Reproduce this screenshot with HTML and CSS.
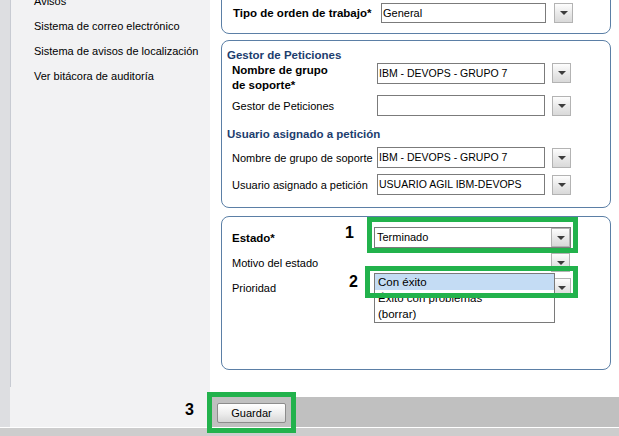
FILE: index.html
```html
<!DOCTYPE html>
<html lang="es">
<head>
<meta charset="utf-8">
<title>Orden de trabajo</title>
<link rel="stylesheet" href="styles.css">
</head>
<body>
<div class="app">
  <div class="top">
    <aside class="sidebar">
      <div class="strip"></div>
      <nav class="nav">
        <ul class="nav-list">
          <li>Avisos</li>
          <li>Sistema de correo electrónico</li>
          <li>Sistema de avisos de localización</li>
          <li>Ver bitácora de auditoría</li>
        </ul>
        <div class="nav-foot"></div>
      </nav>
    </aside>
    <main class="main">
      <div class="content">
        <section class="panel panel-1">
          <div class="row">
            <span class="label label-1 bold">Tipo de orden de trabajo*</span>
            <span class="field field-1">General</span>
            <span class="drop drop-1"></span>
          </div>
        </section>

        <section class="panel panel-2">
          <h3 class="heading">Gestor de Peticiones</h3>
          <div class="row row-tall">
            <span class="label bold two-line">Nombre de grupo<br>de soporte*</span>
            <span class="field">IBM - DEVOPS - GRUPO 7</span>
            <span class="drop"></span>
          </div>
          <div class="row row-gap1">
            <span class="label">Gestor de Peticiones</span>
            <span class="field"></span>
            <span class="drop"></span>
          </div>
          <h3 class="heading heading-2">Usuario asignado a petición</h3>
          <div class="row row-gap5">
            <span class="label">Nombre de grupo de soporte</span>
            <span class="field">IBM - DEVOPS - GRUPO 7</span>
            <span class="drop"></span>
          </div>
          <div class="row row-gap6">
            <span class="label">Usuario asignado a petición</span>
            <span class="field">USUARIO AGIL IBM-DEVOPS</span>
            <span class="drop"></span>
          </div>
        </section>

        <section class="panel panel-3">
          <div class="row">
            <span class="label label-3 bold">Estado*</span>
            <span class="combo"><span class="combo-text">Terminado</span><span class="drop drop-in"></span></span>
          </div>
          <div class="row row-gap4">
            <span class="label label-3">Motivo del estado</span>
            <span class="combo combo-plain"><span class="combo-text"></span><span class="drop drop-in"></span></span>
          </div>
          <div class="row row-gap4">
            <span class="label label-3">Prioridad</span>
            <span class="combo combo-plain combo-shift"><span class="combo-text"></span><span class="drop drop-in"></span></span>
          </div>
          <ul class="list">
            <li class="list-item selected">Con éxito</li>
            <li class="list-item">Éxito con problemas</li>
            <li class="list-item">(borrar)</li>
          </ul>
        </section>
      </div>
      <div class="footer">
        <button class="btn" type="button">Guardar</button>
      </div>
    </main>
  </div>
  <div class="bottom"></div>

  <div class="mark mark-1"></div>
  <div class="mark mark-2"></div>
  <div class="mark mark-3"></div>
  <span class="num num-1">1</span>
  <span class="num num-2">2</span>
  <span class="num num-3">3</span>
</div>
</body>
</html>
```

FILE: styles.css
```css
html, body {
  margin: 0;
  padding: 0;
}

body {
  font-family: "Liberation Sans", Arial, sans-serif;
  font-size: 11px;
  color: #000;
  background: #fff;
}

.app {
  position: relative;
  width: 619px;
  height: 436px;
  overflow: hidden;
  display: flex;
  flex-direction: column;
}

.top {
  display: flex;
  height: 427px;
}

/* Sidebar */
.sidebar {
  width: 210px;
  flex: none;
  display: flex;
  background: #f2f2f3;
}

.strip {
  width: 10px;
  background: #dddee1;
}

.nav {
  flex: 1;
  display: flex;
  flex-direction: column;
}

.nav-list {
  flex: 1;
  list-style: none;
  margin: -11px 0 0;
  padding: 0 0 0 23px;
  border-left: 1px solid #c8cbd2;
}

.nav-list li {
  height: 25px;
  line-height: 25px;
  white-space: nowrap;
}

.nav-foot {
  height: 40px;
}

/* Main */
.main {
  flex: 1;
  display: flex;
  flex-direction: column;
  background: #fff;
}

.content {
  flex: 1;
  padding-left: 11px;
}

.panel {
  width: 390px;
  box-sizing: border-box;
  border: 1px solid #5b7fa6;
  border-radius: 8px;
  padding: 0 10px;
}

.panel-1 {
  margin-top: -10px;
  padding-top: 11px;
  padding-bottom: 10px;
  padding-left: 11px;
}

.panel-2 {
  margin-top: 6px;
  padding-top: 8px;
  padding-bottom: 12px;
}

.panel-3 {
  position: relative;
  margin-top: 8px;
  padding-top: 10px;
  height: 154px;
}

.heading {
  margin: 0 0 0 -5px;
  height: 14px;
  line-height: 13px;
  font-size: 11.5px;
  font-weight: bold;
  color: #1c3d6e;
}

.heading-2 {
  margin-top: 12px;
}

.row {
  display: flex;
  align-items: center;
  height: 21px;
}

.row-tall {
  height: 31px;
  align-items: flex-start;
}

.row-gap1 { margin-top: 1px; }
.row-gap4 { margin-top: 4px; }
.row-gap5 { margin-top: 5px; }
.row-gap6 { margin-top: 6px; }

.label {
  width: 145px;
  flex: none;
  white-space: nowrap;
}

.label-1 { width: 148px; }
.label-3 { width: 142px; }

.bold {
  font-weight: bold;
  font-size: 11.5px;
}

.two-line {
  line-height: 15px;
}

.field {
  width: 168px;
  height: 21px;
  box-sizing: border-box;
  border: 1px solid #7b7b7b;
  background: #fff;
  padding-left: 1px;
  font-size: 10.5px;
  line-height: 19px;
  white-space: nowrap;
}

.field-1 {
  width: 165px;
  height: 20px;
  line-height: 18px;
  font-size: 11px;
}

.drop {
  width: 19px;
  height: 20px;
  margin-left: 7px;
  box-sizing: border-box;
  border: 1px solid #b3b3b3;
  background: linear-gradient(#fdfdfd, #e6e6e6 60%, #d9d9d9);
  display: flex;
  align-items: center;
  justify-content: center;
}

.drop-1 {
  margin-left: 8px;
}

.drop::after {
  content: "";
  width: 0;
  height: 0;
  border-left: 4px solid transparent;
  border-right: 4px solid transparent;
  border-top: 4px solid #3c3c3c;
}

.combo {
  width: 197px;
  height: 21px;
  box-sizing: border-box;
  border: 1px solid #7b7b7b;
  background: #fff;
  display: flex;
}

.combo-plain {
  border-color: #fff;
}

.combo-shift {
  margin-left: 1px;
}

.combo-text {
  flex: 1;
  padding-left: 2px;
  line-height: 19px;
}

.drop-in {
  margin-left: 0;
  height: 19px;
}

/* Dropdown list */
.list {
  position: absolute;
  left: 152px;
  top: 56px;
  width: 181px;
  margin: 0;
  padding: 0;
  list-style: none;
  box-sizing: border-box;
  border: 1px solid #7a7a7a;
  background: #fff;
}

.list-item {
  height: 16px;
  line-height: 16px;
  padding-left: 3px;
  font-size: 11.5px;
  white-space: nowrap;
}

.list-item.selected {
  background: #c4dcf4;
}

/* Footer */
.footer {
  height: 30px;
  box-sizing: border-box;
  background: #c0c0c0;
  padding: 6px 0 0 7px;
}

.btn {
  width: 69px;
  height: 20px;
  padding: 0;
  margin: 0;
  font-family: "Liberation Sans", Arial, sans-serif;
  font-size: 11px;
  color: #000;
  border: 1px solid #8c8c8c;
  border-radius: 2px;
  background: linear-gradient(#ffffff, #ececec 55%, #d6d6d6);
}

.bottom {
  height: 9px;
  box-sizing: border-box;
  border-top: 1px solid #fff;
  background: #cdcdcd;
}

/* Annotations */
.mark {
  position: absolute;
  box-sizing: border-box;
  border: 5px solid #22b24c;
}

.mark-1 { left: 367px; top: 217px; width: 211px; height: 36px; }
.mark-2 { left: 365px; top: 266px; width: 213px; height: 32px; }
.mark-3 { left: 207px; top: 392px; width: 89px; height: 41px; }

.num {
  position: absolute;
  font-family: "Liberation Sans", Arial, sans-serif;
  font-weight: bold;
  font-size: 16px;
  line-height: 16px;
  color: #000;
}

.num-1 { left: 345px; top: 225px; }
.num-2 { left: 349px; top: 274px; }
.num-3 { left: 185px; top: 402px; }
```
